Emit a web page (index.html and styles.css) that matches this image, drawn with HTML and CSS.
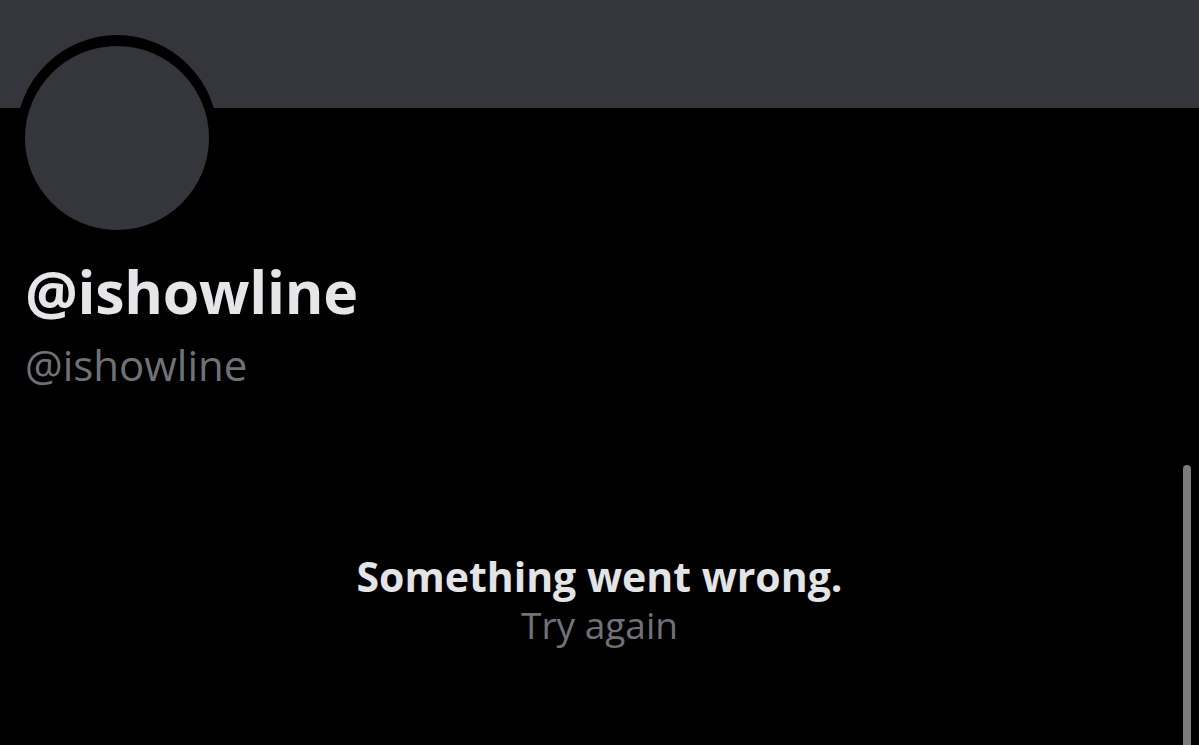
FILE: index.html
```html
<!DOCTYPE html>
<html>
<head>
    <title>@ishowline</title>
    <link rel="stylesheet" href="styles.css">
</head>
<body>
    <div class="banner"></div>

    <div class="profile">
        <div class="avatar-ring">
            <div class="avatar"></div>
        </div>
        <div class="display-name">@ishowline</div>
        <div class="handle">@ishowline</div>
    </div>

    <div class="error">
        <div class="error-title">Something went wrong.</div>
        <div class="error-retry">Try again</div>
    </div>

    <div class="scrollbar"></div>
</body>
</html>
```

FILE: styles.css
```css
body {
    margin: 0;
    padding: 0;
    background-color: #000;
    font-family: "Open Sans", "Noto Sans", sans-serif;
    color: #e7e9ea;
    overflow: hidden;
    height: 745px;
}
.banner {
    height: 108px;
    background-color: #35363b;
}
.profile {
    padding-left: 25px;
}
.avatar-ring {
    width: 184px;
    height: 184px;
    margin-top: -73px;
    margin-left: -9px;
    border: 9px solid #000;
    border-top-width: 11px;
    border-radius: 50%;
    background-color: #000;
}
.avatar {
    width: 184px;
    height: 184px;
    border-radius: 50%;
    background-color: #35363b;
}
.display-name {
    margin-top: 20px;
    font-size: 59px;
    font-weight: 700;
    line-height: 64px;
    letter-spacing: -0.3px;
    color: #e5e6e8;
}
.handle {
    margin-top: 17px;
    font-size: 42px;
    line-height: 50px;
    color: #6f7377;
}
.error {
    margin-top: 161px;
    text-align: center;
}
.error-title {
    font-size: 41px;
    font-weight: 700;
    line-height: 50px;
    color: #e3e4e6;
}
.error-retry {
    margin-top: 2px;
    font-size: 37px;
    line-height: 44px;
    color: #6f7377;
}
.scrollbar {
    position: absolute;
    left: 1183px;
    top: 465px;
    width: 8px;
    height: 290px;
    border-radius: 4px;
    background-color: #7b7b7b;
}
```
